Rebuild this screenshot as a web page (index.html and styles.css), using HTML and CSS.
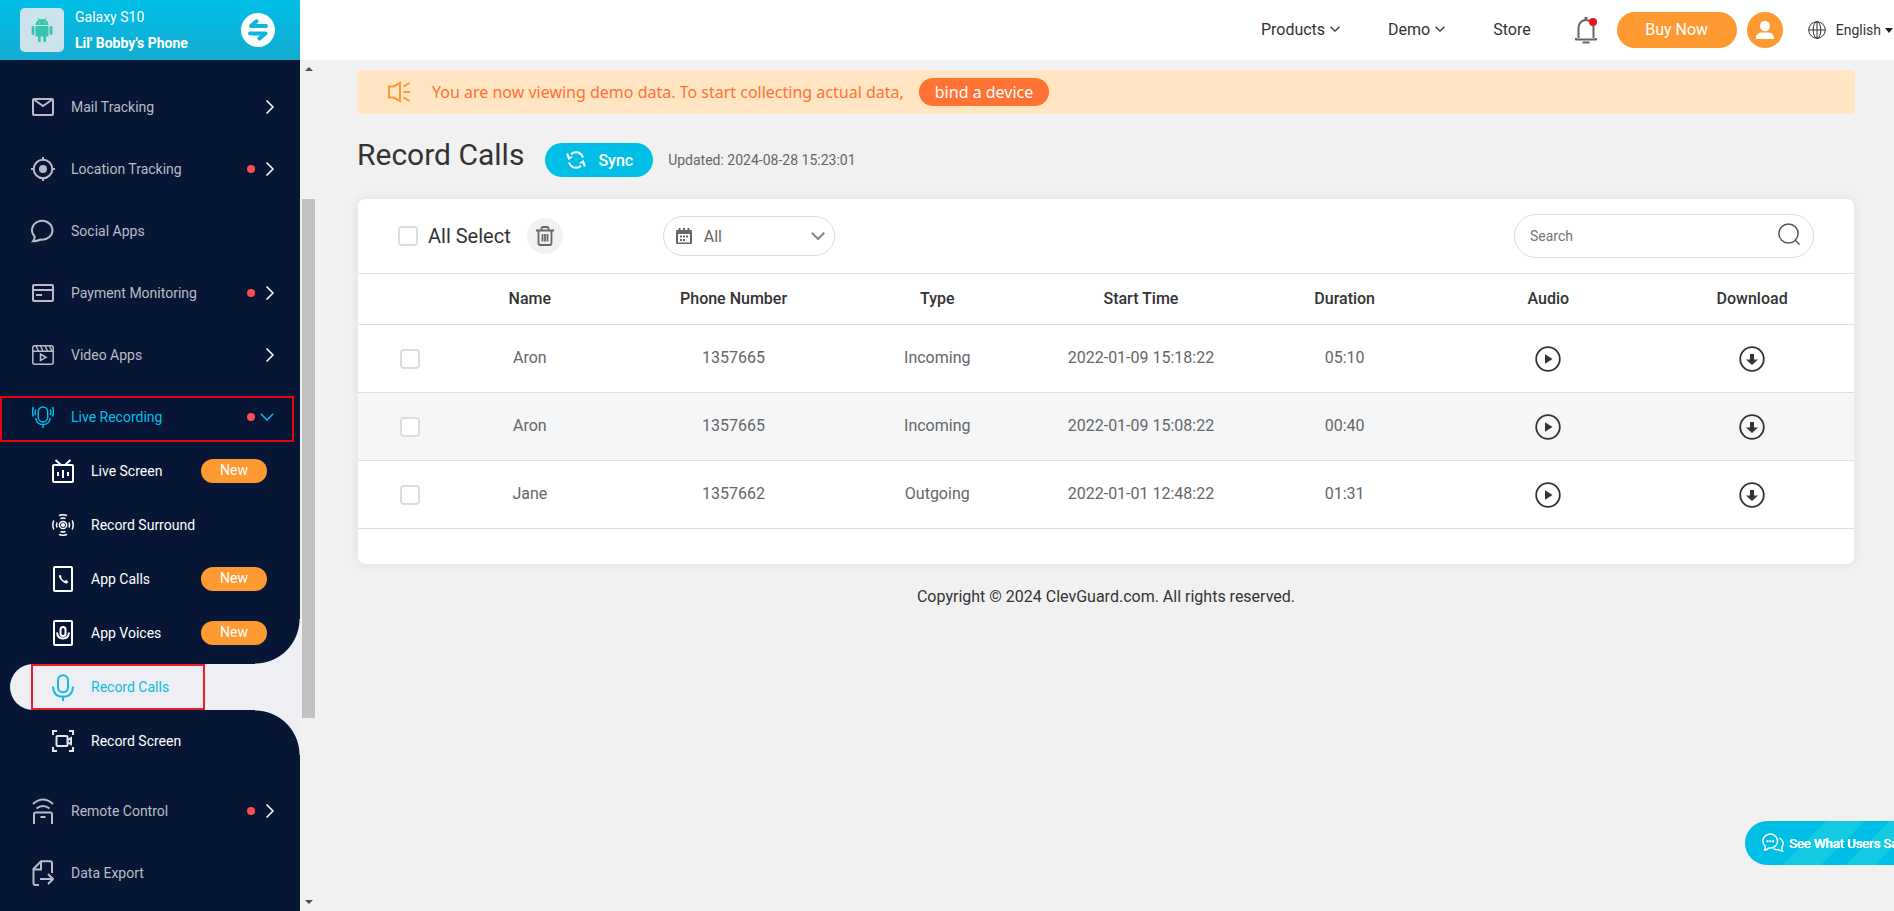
FILE: index.html
```html
<!DOCTYPE html>
<html lang="en">
<head>
<meta charset="utf-8">
<meta name="viewport" content="width=device-width, initial-scale=1">
<title>Record Calls</title>
<link rel="stylesheet" href="styles.css">
</head>
<body>
<svg class="sprite" aria-hidden="true">
  <symbol id="chev-right" viewBox="0 0 10 16"><path d="M1.500 1.500 8 8l-6.500 6.500"/></symbol>
  <symbol id="chev-down" viewBox="0 0 14 8"><path d="M.8.8 7 7 13.200.8"/></symbol>
  <symbol id="play" viewBox="0 0 26 26"><circle cx="13" cy="13" r="11.800"/><path class="solid" d="M10 8.300v9.400l7.500-4.700z"/></symbol>
  <symbol id="download" viewBox="0 0 26 26"><circle cx="13" cy="13" r="11.800"/><path class="solid" d="M11 8h4v5.500h4L13 19l-6-5.500h4z"/></symbol>
</svg>

<div class="shell">
  <aside class="sidebar">
    <div class="device">
      <div class="device-pic">
        <svg width="22" height="26" viewBox="0 0 22 26" fill="#35c4ae"><path d="M4.500 8a6.500 6 0 0 1 13 0z"/><path d="M7 .8 8.600 3.200M15 .8l-1.600 2.400" stroke="#35c4ae"/><path d="M4.500 9h13v9.500q0 1-1 1H15V24q0 1.200-1.300 1.200T12.400 24v-4.500H9.600V24q0 1.200-1.300 1.200T7 24v-4.500H5.500q-1 0-1-1z"/><rect x=".6" y="9" width="2.800" height="9" rx="1.400"/><rect x="18.600" y="9" width="2.800" height="9" rx="1.400"/><circle cx="8.300" cy="5.600" r=".7" fill="#cde3eb"/><circle cx="13.700" cy="5.600" r=".7" fill="#cde3eb"/></svg>
      </div>
      <div class="device-text">
        <span>Galaxy S10</span>
        <strong>Lil' Bobby's Phone</strong>
      </div>
      <button class="swap" aria-label="Switch device">
        <svg width="34" height="34" viewBox="0 0 34 34"><circle cx="17" cy="17" r="17" fill="#fff"/><path d="M25 13H10L15.500 8.300M9 20.500h15.500L18.500 25.500" fill="none" stroke="#0db7dc" stroke-width="4" stroke-linecap="round" stroke-linejoin="round"/></svg>
      </button>
    </div>

    <nav class="menu" aria-label="Features">
      <ul class="menu-list">
        <li><a class="item" href="#"><span class="ico"><svg width="22" height="18" viewBox="0 0 22 18"><rect x="1" y="1" width="20" height="16" rx="1"/><path d="M2.500 2 11 8l8.500-6"/></svg></span>Mail Tracking<svg class="arrow" width="10" height="16"><use href="#chev-right"/></svg></a></li>
        <li><a class="item" href="#"><span class="ico"><svg width="24" height="24" viewBox="0 0 24 24"><circle cx="12" cy="12" r="9.300"/><circle class="solid" cx="12" cy="12" r="4"/><path d="M12 0v3M12 21v3M0 12h3M21 12h3"/></svg></span>Location Tracking<i class="dot"></i><svg class="arrow" width="10" height="16"><use href="#chev-right"/></svg></a></li>
        <li><a class="item" href="#"><span class="ico"><svg width="24" height="24" viewBox="0 0 24 24"><path d="M3.600 17.500A10.200 9.400 0 1 1 9.500 20.500Q6 22.300 2 22.300 3.800 20 3.600 17.500z"/></svg></span>Social Apps</a></li>
        <li><a class="item" href="#"><span class="ico"><svg width="22" height="18" viewBox="0 0 22 18"><rect x="1" y="1" width="20" height="16" rx="1"/><path d="M1 6h20M4 11h6"/></svg></span>Payment Monitoring<i class="dot"></i><svg class="arrow" width="10" height="16"><use href="#chev-right"/></svg></a></li>
        <li><a class="item" href="#"><span class="ico"><svg class="fine" width="22" height="20" viewBox="0 0 22 20"><rect x=".8" y=".8" width="20.400" height="18.400" rx="2"/><path d="M1 6.200h20M4 1l2.500 5M8.500 1 11 6M13 1l2.500 5M17.500 1 20 6M8.500 9v6.500l5.500-3.200z"/></svg></span>Video Apps<svg class="arrow" width="10" height="16"><use href="#chev-right"/></svg></a></li>
        <li>
          <a class="item open marked" href="#"><span class="ico"><svg class="fine" width="22" height="22" viewBox="0 0 22 22"><rect x="6.300" y=".9" width="9.400" height="15" rx="4.700"/><path d="M3.800 12q.8 6.600 7.200 6.600t7.200-6.600M11 18.600V22M3.700 3.500q-1.200 2.800 0 5.600M18.300 3.500q1.200 2.800 0 5.600M1.500 1Q-.5 5.700 1.500 10.500M20.500 1q2 4.700 0 9.500"/></svg></span>Live Recording<i class="dot"></i><svg class="arrow-down" width="14" height="8"><use href="#chev-down"/></svg></a>
          <ul class="submenu">
            <li><a class="item sub" href="#"><span class="ico"><svg width="22" height="24" viewBox="0 0 22 24"><rect x="1" y="6" width="20" height="17" rx="1"/><path d="m3.500 1 5 4.500M18.500 1l-5 4.500M6 13v4M11 11v8M16 13v4"/></svg></span>Live Screen<em class="badge">New</em></a></li>
            <li><a class="item sub" href="#"><span class="ico"><svg class="fine" width="22" height="22" viewBox="0 0 22 22"><circle cx="11" cy="11" r="3.600"/><circle class="solid" cx="11" cy="11" r="2"/><path d="M5 8.500q-1 2.500 0 5M17 8.500q1 2.500 0 5M1.800 6.500q-2 4.500 0 9M20.200 6.500q2 4.500 0 9M8.500 4.500q2.500-1 5 0M8.500 17.500q2.500 1 5 0M7 1.500q4-1.500 8 0M7 20.500q4 1.500 8 0"/></svg></span>Record Surround</a></li>
            <li><a class="item sub" href="#"><span class="ico"><svg width="20" height="26" viewBox="0 0 20 26"><rect x="1" y="1" width="18" height="24" rx="1"/><path class="solid" d="M6 9.500q1.500-1.500 2.500.8-.6 1.200 0 2 1.300 1.800 2.700 2.600 1 0 1.800-.8 2.500.6 1.800 2.600Q13 18.500 9.500 15.500 5.500 12 6 9.500z"/></svg></span>App Calls<em class="badge">New</em></a></li>
            <li><a class="item sub" href="#"><span class="ico"><svg width="20" height="26" viewBox="0 0 20 26"><rect x="1" y="1" width="18" height="24" rx="1"/><rect x="7.500" y="7" width="5" height="9" rx="2.500"/><path d="M4 12.500q.5 6 6 6t6-6"/></svg></span>App Voices<em class="badge">New</em></a></li>
            <li class="current"><a class="item sub" href="#" aria-current="page"><span class="ico"><svg width="22" height="27" viewBox="0 0 22 27"><rect x="6" y="1.200" width="10" height="17" rx="5"/><path d="M1 12.500q.5 10.300 10 10.300t10-10.300M11 23v4"/></svg></span>Record Calls</a></li>
            <li><a class="item sub" href="#"><span class="ico"><svg class="mid" width="22" height="22" viewBox="0 0 22 22"><path d="M1 5V1h4M17 1h4v4M21 17v4h-4M5 21H1v-4M15.500 10l3.500-1.800v6l-3.500-1.800"/><rect x="4.500" y="6" width="11" height="10" rx="1"/></svg></span>Record Screen</a></li>
          </ul>
        </li>
        <li><a class="item" href="#"><span class="ico"><svg width="22" height="26" viewBox="0 0 22 26"><path d="M1 6Q11-3 21 6M4.500 10.500q6.500-5 13 0M2 26V16q0-1.500 1.500-1.500h15q1.500 0 1.500 1.500v10M8.500 19h5"/></svg></span>Remote Control<i class="dot"></i><svg class="arrow" width="10" height="16"><use href="#chev-right"/></svg></a></li>
        <li><a class="item" href="#"><span class="ico"><svg width="22" height="26" viewBox="0 0 22 26"><path d="M7 25H3.500Q1.500 25 1.500 23V9L9 1.200h9q2 0 2 2V13M1.500 9.500H9V1.500M8 19h12M16 14l5 5-5 5"/></svg></span>Data Export</a></li>
      </ul>
    </nav>
  </aside>

  <div class="page">
    <header class="topbar">
      <nav class="topnav" aria-label="Site">
        <a href="#">Products<svg width="10" height="6"><use href="#chev-down"/></svg></a>
        <a href="#">Demo<svg width="10" height="6"><use href="#chev-down"/></svg></a>
        <a href="#">Store</a>
      </nav>
      <button class="bell" aria-label="Notifications">
        <svg width="22" height="28" viewBox="0 0 22 28" fill="none" stroke="#666" stroke-width="2"><path d="M3.500 22V11.500a7.500 7.500 0 0 1 15 0V22M1 22v1.500h20V22M7.500 26.500h7" stroke-linejoin="round"/><path d="M11 1v2.500" stroke-width="3"/><circle cx="18" cy="6" r="4" fill="#e7171f" stroke="none"/></svg>
      </button>
      <button class="buy">Buy Now</button>
      <button class="avatar" aria-label="Account">
        <svg width="36" height="36" viewBox="0 0 36 36" fill="#fff"><ellipse cx="18" cy="14" rx="5" ry="5.200"/><path d="M8.800 27q0-6.500 5.700-6.500h7q5.700 0 5.700 6.500z"/></svg>
      </button>
      <button class="lang">
        <svg width="18" height="18" viewBox="0 0 18 18" fill="none" stroke="#333"><circle cx="9" cy="9" r="8.300"/><ellipse cx="9" cy="9" rx="3.800" ry="8.300"/><path d="M.7 9h16.600M9 .7v16.600"/></svg>
        <span>English</span>
        <i class="caret"></i>
      </button>
    </header>

    <div class="body">
      <div class="track" aria-hidden="true"><i class="up"></i><div class="thumb"></div><i class="down"></i></div>
      <main class="content">
        <div class="notice">
          <svg width="24" height="22" viewBox="0 0 24 22" fill="none" stroke="#ff9a33" stroke-width="2"><path d="M2 5.500h4.500L13 2v18l-6.500-3.500H2zM16.500 5.500l6-3.500M16.500 11H23M16.500 16.500l6 3.500"/></svg>
          <p>You are now viewing demo data. To start collecting actual data,</p>
          <a class="bind" href="#">bind a device</a>
        </div>

        <div class="heading">
          <h1>Record Calls</h1>
          <button class="sync">
            <svg width="20" height="18" viewBox="0 0 20 18" fill="none" stroke="#fff" stroke-width="2"><path d="M5 3.200Q7 1.200 10 1.200q5 0 7 5.300M15 14.800Q13 16.800 10 16.800q-5 0-7-5.300"/><path fill="#fff" stroke="none" d="M0 3l2.500 6L7.500 5.500l-4 .2-1.300-3.400zM20 15l-2.500-6-5 3.500 4-.2 1.300 3.400z"/></svg>
            Sync
          </button>
          <span class="updated">Updated: 2024-08-28 15:23:01</span>
        </div>

        <section class="card">
          <div class="tools">
            <label class="all"><input type="checkbox" class="check">All Select</label>
            <button class="trash" aria-label="Delete selected">
              <svg width="18" height="20" viewBox="0 0 18 20" fill="none" stroke="#666" stroke-width="1.800"><path d="M0 4.500h18M5.500 4V2.500Q5.500 1 7 1h4q1.500 0 1.500 1.500V4M2.500 5v12q0 2 2 2h9q2 0 2-2V5M6.500 8v7.500M9 8v7.500M11.500 8v7.500"/></svg>
            </button>
            <div class="range">
              <svg width="16" height="17" viewBox="0 0 16 17"><path fill="#666" fill-rule="evenodd" d="M2.500 0h2v2h2.500V0h2v2h2.500V0h2v2H15q1 0 1 1v12q0 1-1 1H1q-1 0-1-1V3q0-1 1-1h1.500zM2 6v8.500h12V6z"/><path fill="#666" d="M7 7.500h2v2H7zM10 7.500h2v2h-2zM4 7.500h2v2H4zM4 11h2v2H4zM7 11h2v2H7z"/></svg>
              <select aria-label="Date range"><option>All</option></select>
              <svg class="range-arrow" width="14" height="8"><use href="#chev-down"/></svg>
            </div>
            <div class="search">
              <input type="search" placeholder="Search" aria-label="Search">
              <button aria-label="Search"><svg width="22" height="22" viewBox="0 0 22 22" fill="none" stroke="#555" stroke-width="1.500"><circle cx="10.500" cy="10.500" r="9.600"/><path d="m17 17 4.500 4.500"/></svg></button>
            </div>
          </div>

          <table>
            <thead>
              <tr><th class="pick"></th><th>Name</th><th>Phone Number</th><th>Type</th><th>Start Time</th><th>Duration</th><th>Audio</th><th>Download</th></tr>
            </thead>
            <tbody>
              <tr><td class="pick"><input type="checkbox" class="check" aria-label="Select call 1"></td><td>Aron</td><td>1357665</td><td>Incoming</td><td>2022-01-09 15:18:22</td><td>05:10</td><td class="act"><button class="round" aria-label="Play"><svg width="26" height="26"><use href="#play"/></svg></button></td><td class="act"><button class="round" aria-label="Download"><svg width="26" height="26"><use href="#download"/></svg></button></td></tr>
              <tr><td class="pick"><input type="checkbox" class="check" aria-label="Select call 2"></td><td>Aron</td><td>1357665</td><td>Incoming</td><td>2022-01-09 15:08:22</td><td>00:40</td><td class="act"><button class="round" aria-label="Play"><svg width="26" height="26"><use href="#play"/></svg></button></td><td class="act"><button class="round" aria-label="Download"><svg width="26" height="26"><use href="#download"/></svg></button></td></tr>
              <tr><td class="pick"><input type="checkbox" class="check" aria-label="Select call 3"></td><td>Jane</td><td>1357662</td><td>Outgoing</td><td>2022-01-01 12:48:22</td><td>01:31</td><td class="act"><button class="round" aria-label="Play"><svg width="26" height="26"><use href="#play"/></svg></button></td><td class="act"><button class="round" aria-label="Download"><svg width="26" height="26"><use href="#download"/></svg></button></td></tr>
            </tbody>
          </table>
        </section>

        <footer>Copyright © 2024 ClevGuard.com. All rights reserved.</footer>
      </main>
    </div>
  </div>
</div>

<a class="reviews" href="#">
  <svg width="22" height="20" viewBox="0 0 22 20" fill="none" stroke="#fff" stroke-width="1.400"><path d="M3 13A7.300 7 0 1 1 7 15Q5 17 2.500 17 3.600 15 3 13z"/><path d="M17.300 5.200q3.800 1.800 3.800 5.300 0 2-1.300 3.600-.3 2 .8 4-2.500-.2-4-1.600-3.100.7-5.100-1"/><path d="M4.500 8.200h7.500" stroke-width="2" stroke-dasharray="2 .8"/></svg>
  <span>See What Users Say</span>
</a>
</body>
</html>
```

FILE: styles.css
```css
* {
  box-sizing: border-box;
}

body {
  margin: 0;
  font-family: Roboto, "Liberation Sans", sans-serif;
  font-size: 16px;
  color: #333;
  background: #f1f1f1;
}

button {
  margin: 0;
  padding: 0;
  border: 0;
  background: none;
  font: inherit;
  color: inherit;
  cursor: pointer;
}

a {
  color: inherit;
  text-decoration: none;
}

ul {
  list-style: none;
  margin: 0;
  padding: 0;
}

svg {
  display: block;
  flex: none;
}

.sprite {
  display: none;
}

.shell {
  display: flex;
  height: 100vh;
  overflow: hidden;
}

/* Sidebar */

.sidebar {
  display: flex;
  flex-direction: column;
  flex: none;
  width: 300px;
  background: #071635;
}

.device {
  display: flex;
  align-items: center;
  flex: none;
  height: 60px;
  padding: 0 25px 0 20px;
  color: #fff;
  font-size: 14px;
  background: linear-gradient(#00bfe8, #14abd0);
}

.device-pic {
  display: flex;
  align-items: center;
  justify-content: center;
  width: 44px;
  height: 44px;
  margin-right: 11px;
  border-radius: 5px;
  background: #cde3eb;
}

.device-text {
  display: flex;
  flex: 1;
  flex-direction: column;
  line-height: 26px;
}

.menu {
  flex: 1;
  min-height: 0;
  overflow: hidden;
  padding-top: 12px;
}

.menu-list > li {
  padding-top: 8px;
}

.item {
  display: flex;
  align-items: center;
  height: 54px;
  padding: 0 25px 0 31px;
  color: #b9bcc6;
  font-size: 14px;
}

.ico {
  display: flex;
  justify-content: center;
  width: 24px;
  margin-right: 16px;
  fill: none;
  stroke: currentColor;
  stroke-width: 2px;
}

.fine {
  stroke-width: 1.500px;
}

.mid {
  color: #e3e5ea;
}

.solid {
  fill: currentColor;
  stroke: none;
}

.dot {
  width: 8px;
  height: 8px;
  margin-left: auto;
  border-radius: 50%;
  background: #ff4d4f;
}

.arrow {
  margin-left: auto;
  fill: none;
  stroke: #fff;
  stroke-width: 1.500px;
}

.dot + .arrow {
  margin-left: 10px;
}

.arrow-down {
  margin-left: 5px;
  fill: none;
  stroke: currentColor;
  stroke-width: 1.500px;
}

.item.open {
  padding-right: 26px;
  color: #00bfe8;
}

.marked {
  position: relative;
}

.marked::after {
  content: "";
  position: absolute;
  inset: 6px 6px 2px 0;
  border: 2px solid #e60510;
}

.submenu {
  padding-bottom: 8px;
}

.item.sub {
  padding: 0 33px 0 51px;
  color: #fff;
}

.badge {
  width: 66px;
  height: 24px;
  margin-left: auto;
  border-radius: 12px;
  background: #ff9a33;
  font-style: normal;
  line-height: 22px;
  text-align: center;
}

.current {
  position: relative;
  height: 46px;
  margin: 4px 0 4px 10px;
  border-radius: 23px 0 0 23px;
  background: #eeeff4;
}

.current::before,
.current::after {
  content: "";
  position: absolute;
  right: 0;
  width: 45px;
  height: 45px;
  pointer-events: none;
}

.current::before {
  bottom: 100%;
  background: radial-gradient(circle at 0 0, transparent 44px, #eeeff4 45px);
}

.current::after {
  top: 100%;
  background: radial-gradient(circle at 0 100%, transparent 44px, #eeeff4 45px);
}

.current .item {
  width: 174px;
  height: 46px;
  margin-left: 21px;
  padding: 0 0 0 18px;
  border: 2px solid #ee1c25;
  color: #0dbce3;
}

/* Top bar */

.page {
  display: flex;
  flex: 1;
  flex-direction: column;
  min-width: 0;
}

.topbar {
  display: flex;
  align-items: center;
  justify-content: flex-end;
  flex: none;
  height: 60px;
  padding-right: 1px;
  background: #fff;
}

.topnav {
  display: flex;
  gap: 48px;
  margin: 0 44px 2px 0;
}

.topnav a {
  display: flex;
  align-items: center;
  gap: 5px;
}

.topnav svg {
  fill: none;
  stroke: #333;
  stroke-width: 1.800px;
}

.bell {
  margin-right: 20px;
}

.buy {
  width: 120px;
  height: 36px;
  margin-right: 10px;
  padding-bottom: 2px;
  border-radius: 18px;
  background: #ff9a33;
  color: #fff;
}

.avatar {
  width: 36px;
  height: 36px;
  margin-right: 25px;
  border-radius: 50%;
  background: #ff9a33;
}

.lang {
  display: flex;
  align-items: center;
  gap: 10px;
  font-size: 14px;
}

.caret {
  margin-left: -6px;
  border: 4px solid transparent;
  border-top: 5px solid #222;
  border-bottom: 0;
}

/* Content */

.body {
  display: flex;
  flex: 1;
  min-height: 0;
}

.track {
  display: flex;
  flex: none;
  flex-direction: column;
  align-items: center;
  width: 17px;
  padding: 7px 0;
}

.thumb {
  width: 13px;
  height: 62%;
  margin: 128px 0 auto;
  background: #c1c1c1;
}

.up,
.down {
  border: 4px solid transparent;
}

.up {
  border-top: 0;
  border-bottom-color: #505050;
}

.down {
  border-bottom: 0;
  border-top-color: #505050;
}

.content {
  flex: 1;
  min-width: 0;
  padding: 10px 39px 0 40px;
}

.notice {
  display: flex;
  align-items: center;
  height: 44px;
  padding-left: 30px;
  border-radius: 4px;
  background: #ffe5c2;
  color: #ff7233;
  font-family: "Noto Sans", sans-serif;
}

.notice p {
  margin: 0 15px 0 21px;
}

.bind {
  height: 28px;
  padding: 0 16px;
  border-radius: 14px;
  background: #ff7233;
  color: #fff;
  line-height: 28px;
}

.heading {
  display: flex;
  align-items: center;
  height: 84px;
}

h1 {
  margin: 0 21px 3px 0;
  font-size: 30px;
  font-weight: 400;
}

.sync {
  display: flex;
  align-items: center;
  gap: 12px;
  height: 34px;
  padding: 0 20px 0 21px;
  margin: 8px 15px 0 0;
  border-radius: 17px;
  background: #00bfe6;
  color: #fff;
  font-weight: 500;
}

.updated {
  margin-top: 8px;
  color: #666;
  font-size: 14px;
}

.card {
  padding-bottom: 35px;
  border: 1px solid #ebebeb;
  border-radius: 8px;
  background: #fff;
  box-shadow: 0 0 10px rgba(0, 0, 0, 0.08);
}

.tools {
  display: flex;
  align-items: center;
  height: 75px;
  padding: 0 40px;
  border-bottom: 1px solid #e3e4e6;
}

.check {
  appearance: none;
  display: block;
  width: 20px;
  height: 20px;
  margin: 0;
  border: 2px solid #dcdcdc;
  border-radius: 4px;
  background: #fff;
}

.all {
  display: flex;
  align-items: center;
  gap: 10px;
  font-size: 20px;
}

.trash {
  display: flex;
  align-items: center;
  justify-content: center;
  width: 36px;
  height: 36px;
  margin-left: 16px;
  border-radius: 50%;
  background: #f1f1f1;
}

.range {
  position: relative;
  display: flex;
  align-items: center;
  width: 172px;
  height: 40px;
  margin-left: 100px;
  padding-left: 12px;
  border: 1px solid #dcdcdc;
  border-radius: 20px;
}

.range select {
  appearance: none;
  flex: 1;
  height: 38px;
  padding: 0 0 0 12px;
  border: 0;
  background: none;
  color: #666;
  font: inherit;
}

.range-arrow {
  position: absolute;
  right: 9px;
  fill: none;
  stroke: #888;
  stroke-width: 2px;
}

.search {
  display: flex;
  align-items: center;
  width: 300px;
  height: 44px;
  margin-left: auto;
  padding: 0 13px 0 15px;
  border: 1px solid #dcdcdc;
  border-radius: 22px;
}

.search input {
  flex: 1;
  min-width: 0;
  padding: 0;
  border: 0;
  outline: 0;
  background: none;
  font: inherit;
  font-size: 14px;
}

.search input::placeholder {
  color: #757575;
}

.search button {
  margin-bottom: 4px;
}

table {
  width: 100%;
  border-collapse: separate;
  border-spacing: 0;
  table-layout: fixed;
}

th,
td {
  padding: 0 0 2px;
  border-bottom: 1px solid #dcdfe2;
  text-align: center;
  vertical-align: middle;
}

th {
  height: 51px;
  font-weight: 500;
}

td {
  height: 68px;
  color: #666;
}

tbody tr:nth-child(even) {
  background: #f5f6f8;
}

.pick {
  width: 70px;
  padding: 0 0 0 42px;
}

.act {
  padding: 0;
}

.round svg {
  fill: none;
  stroke: #333;
  stroke-width: 1.800px;
  color: #333;
}

.round {
  display: block;
  margin: 0 auto;
}

footer {
  margin-top: 22px;
  text-align: center;
}

.reviews {
  position: fixed;
  right: 0;
  bottom: 46px;
  display: flex;
  align-items: center;
  gap: 5px;
  width: 149px;
  height: 44px;
  padding-left: 17px;
  border-radius: 22px 0 0 22px;
  background: linear-gradient(135deg, #00bfe6 42%, #12cbe2 42% 62%, #00bfe6 62% 75%, #12cbe2 75% 90%, #00bfe6 90%);
  color: #fff;
  font-size: 13px;
  text-shadow: 1px 0 0 #fff;
  white-space: nowrap;
}
```
